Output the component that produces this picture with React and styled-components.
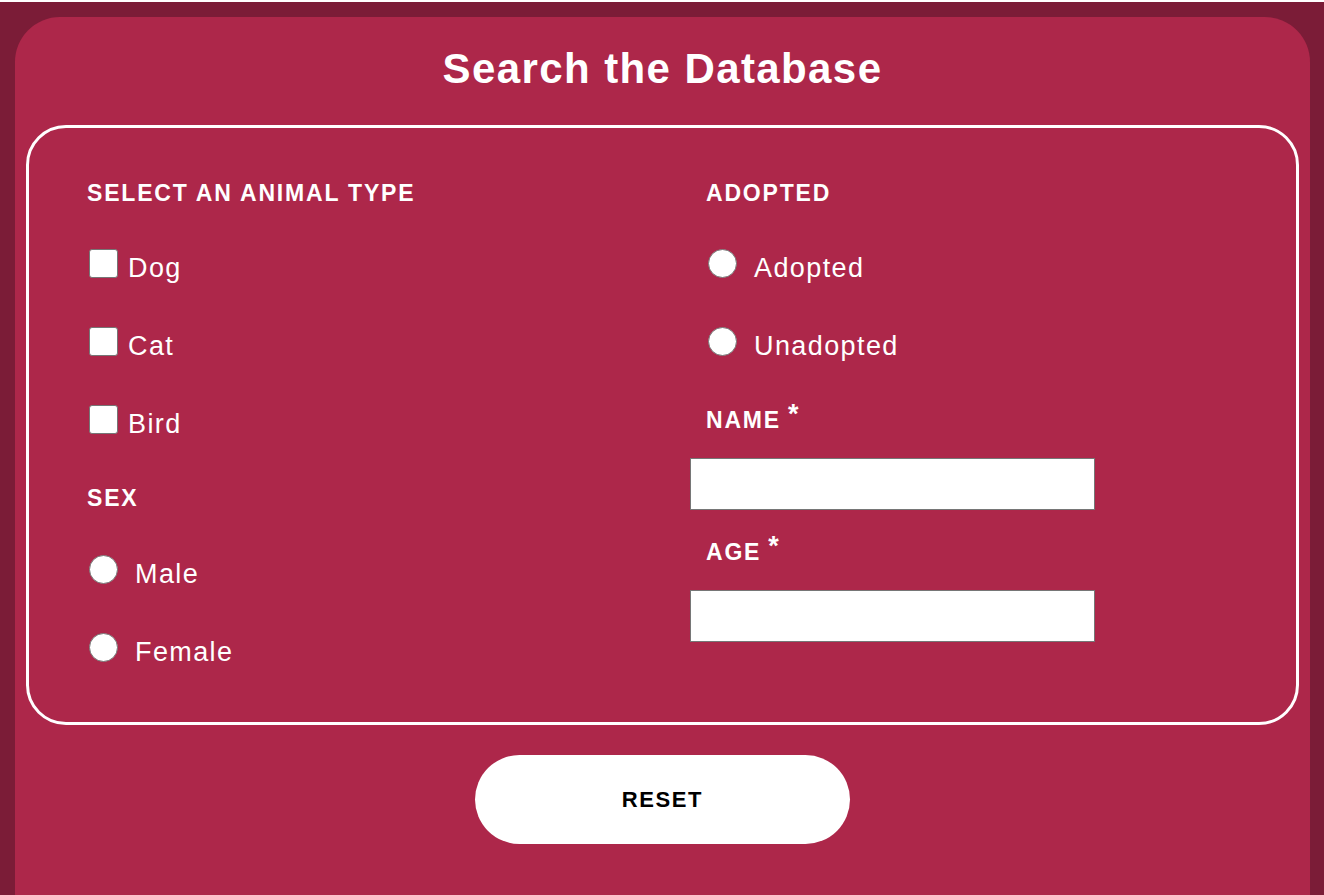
import React from 'react';
import styled, { createGlobalStyle } from 'styled-components';

const GlobalStyle = createGlobalStyle`
  * {
    box-sizing: border-box;
  }

  body {
    margin: 0;
    background: #fff;
    font-family: "Liberation Sans", Arial, sans-serif;
  }
`;

const Page = styled.div`
  margin-top: 2px;
  background: #7b1c37;
  min-height: 893px;
  padding: 15px 14px 0 15px;
  overflow: hidden;
`;

const Card = styled.section`
  background: #ad274a;
  border-radius: 45px;
  padding: 0 11px 60px;
  min-height: 940px;
`;

const Title = styled.h1`
  margin: 0;
  padding: 26px 0 30px;
  text-align: center;
  color: #fff;
  font-size: 42px;
  line-height: 52px;
  font-weight: 700;
  letter-spacing: 1.4px;
`;

const Fieldset = styled.fieldset`
  margin: 0;
  border: 3px solid #fff;
  border-radius: 40px;
  padding: 53px 58px 60px;
  display: grid;
  grid-template-columns: 603px 1fr;
`;

const Column = styled.div`
  display: flex;
  flex-direction: column;
`;

const Heading = styled.h3`
  margin: 0 0 ${(p) => p.$after || 44}px;
  padding-left: ${(p) => p.$indent || 0}px;
  color: #fff;
  font-size: 23px;
  line-height: 24px;
  font-weight: 700;
  letter-spacing: 1.8px;
  text-transform: uppercase;
`;

const Star = styled.sup`
  font-size: 27px;
  margin-left: 7px;
  letter-spacing: 0;
  line-height: 0;
  vertical-align: 5px;
`;

const Option = styled.label`
  display: flex;
  align-items: center;
  gap: ${(p) => (p.$round ? 17 : 10)}px;
  height: 29px;
  margin: 0 0 ${(p) => p.$after || 49}px ${(p) => p.$indent || 2}px;
  color: #fff;
  font-size: 27px;
  letter-spacing: 1.4px;
  cursor: pointer;

  &:last-child {
    margin-bottom: 0;
  }

  span {
    position: relative;
    top: 5px;
  }
`;

const Box = styled.input`
  appearance: none;
  margin: 0;
  flex: none;
  width: 29px;
  height: 29px;
  background: #fff;
  border: 1px solid #767676;
  border-radius: ${(p) => (p.type === 'radio' ? '50%' : '3px')};
`;

const TextInput = styled.input`
  display: block;
  width: 405px;
  height: 52px;
  margin: 0 0 ${(p) => p.$after || 0}px;
  border: 1px solid #767676;
  background: #fff;
  font-size: 20px;
  padding: 0 10px;
`;

const Footer = styled.div`
  display: flex;
  justify-content: center;
  padding-top: 30px;
`;

const ResetButton = styled.button`
  width: 375px;
  height: 89px;
  border: none;
  border-radius: 45px;
  background: #fff;
  color: #000;
  font-family: "Liberation Sans", Arial, sans-serif;
  font-size: 22px;
  font-weight: 700;
  letter-spacing: 1.6px;
  cursor: pointer;
`;

const Check = ({ type = 'checkbox', name, indent, after, children }) => (
  <Option $round={type === 'radio'} $indent={indent} $after={after}>
    <Box type={type} name={name} />
    <span>{children}</span>
  </Option>
);

const App = () => {
  return (
    <Page>
      <GlobalStyle />
      <Card>
        <Title>Search the Database</Title>
        <Fieldset>
          <Column>
            <Heading>Select an animal type</Heading>
            <Check name="dog">Dog</Check>
            <Check name="cat">Cat</Check>
            <Check name="bird" after={52}>Bird</Check>
            <Heading $after={45}>Sex</Heading>
            <Check type="radio" name="sex">Male</Check>
            <Check type="radio" name="sex">Female</Check>
          </Column>
          <Column>
            <Heading $indent={16}>Adopted</Heading>
            <Check type="radio" name="adopted" indent={18}>Adopted</Check>
            <Check type="radio" name="adopted" indent={18} after={52}>
              Unadopted
            </Check>
            <Heading $indent={16} $after={26}>
              Name<Star>*</Star>
            </Heading>
            <TextInput type="text" $after={30} />
            <Heading $indent={16} $after={26}>
              Age<Star>*</Star>
            </Heading>
            <TextInput type="text" />
          </Column>
        </Fieldset>
        <Footer>
          <ResetButton type="reset">RESET</ResetButton>
        </Footer>
      </Card>
    </Page>
  );
};

export default App;
